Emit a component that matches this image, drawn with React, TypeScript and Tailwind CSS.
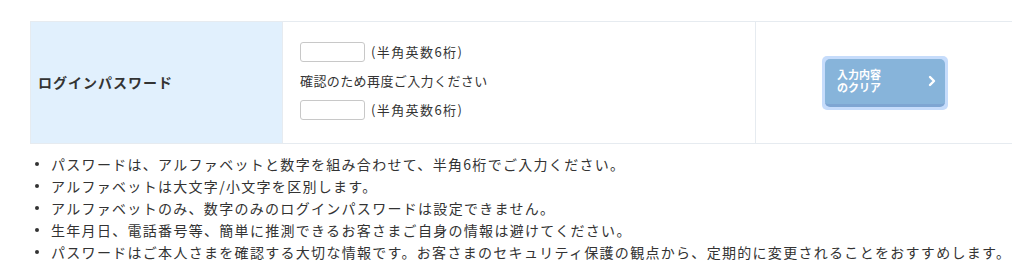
const notes = [
  'パスワードは、アルファベットと数字を組み合わせて、半角6桁でご入力ください。',
  'アルファベットは大文字/小文字を区別します。',
  'アルファベットのみ、数字のみのログインパスワードは設定できません。',
  '生年月日、電話番号等、簡単に推測できるお客さまご自身の情報は避けてください。',
  'パスワードはご本人さまを確認する大切な情報です。お客さまのセキュリティ保護の観点から、定期的に変更されることをおすすめします。',
]

function PasswordInput() {
  return (
    <div className="flex items-center gap-[6px]">
      <input type="password" className="h-[20px] w-[65px] rounded-[3px] border border-[#c8c8c8] bg-white" />
      <span className="tracking-[1.4px]">(半角英数6桁)</span>
    </div>
  )
}

export default function App() {
  return (
    <div className="bg-white pt-[21px] pl-[30px] text-[#333] [font-family:'Noto_Sans_CJK_JP',sans-serif]" style={{ width: 1024, height: 270 }}>
      <table className="w-[982px] border-collapse">
        <tbody>
          <tr className="h-[122px]">
            <th className="w-[252px] border border-[#e6ebf0] bg-[#e1f0fd] pl-[7px] text-left text-[14px] font-bold tracking-[1px]">
              ログインパスワード
            </th>
            <td className="w-[473px] border border-[#e6ebf0] pl-[17px] pb-[3px] text-[13px] tracking-[0.4px]">
              <div className="flex flex-col gap-[9px]">
                <PasswordInput />
                <div className="leading-[20px]">確認のため再度ご入力ください</div>
                <PasswordInput />
              </div>
            </td>
            <td className="border border-[#e6ebf0] border-r-0">
              <div className="flex justify-center pl-[2px]">
                <button className="rounded-[5px] bg-[#c6dcfb] p-[3px]">
                  <span className="flex h-[48px] w-[120px] items-center justify-between rounded-[5px] border-b-[3px] border-[#7ea5d2] bg-[#87b4da] pl-[12px] pr-[8px] text-left text-[11px] font-bold leading-[13px] text-white">
                    <span>入力内容<br />のクリア</span>
                    <svg width="10" height="12" viewBox="0 0 10 12" fill="none" stroke="white" strokeWidth="2.4" strokeLinecap="round" strokeLinejoin="round">
                      <path d="M3 2l4 4-4 4" />
                    </svg>
                  </span>
                </button>
              </div>
            </td>
          </tr>
        </tbody>
      </table>
      <ul className="mt-[9px] pl-[5px] text-[14px] leading-[22px] tracking-[1.3px]">
        {notes.map((n) => (
          <li key={n} className="flex items-start">
            <span className="mt-[9px] mr-[12px] h-[4px] w-[4px] shrink-0 rounded-full bg-[#333]" />
            <span>{n}</span>
          </li>
        ))}
      </ul>
    </div>
  )
}
